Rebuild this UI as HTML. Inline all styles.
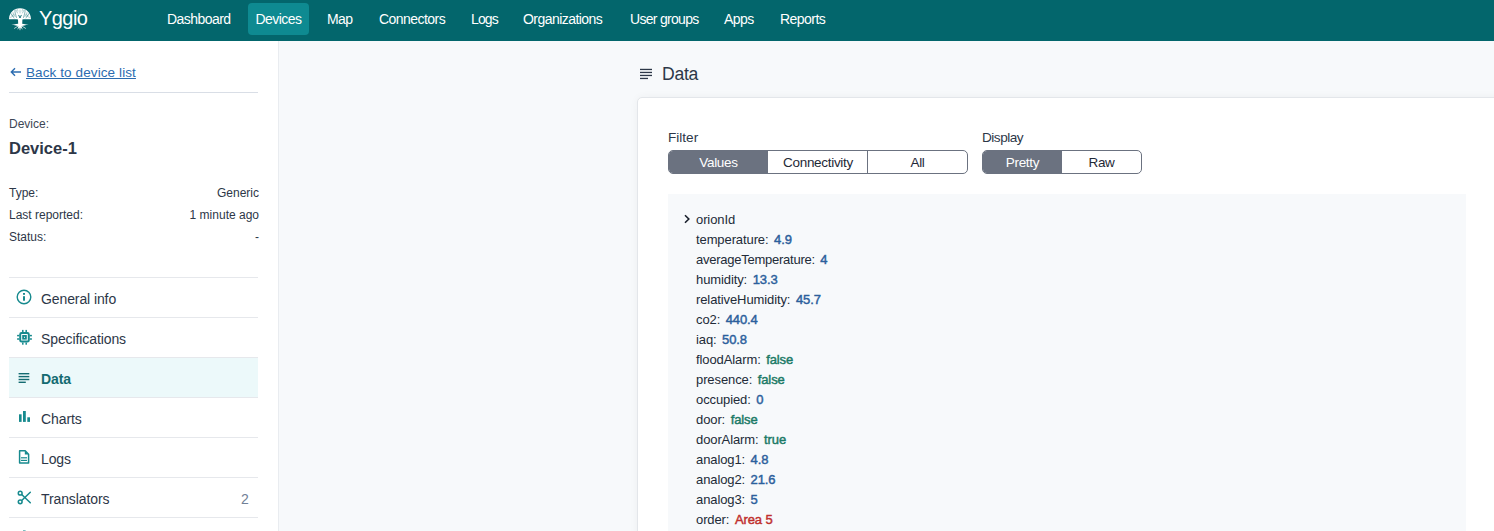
<!DOCTYPE html>
<html><head><meta charset="utf-8">
<style>
*{box-sizing:border-box;margin:0;padding:0}
html,body{width:1494px;height:531px;overflow:hidden;font-family:"Liberation Sans",sans-serif;background:#f7f9fb;color:#2d3748}
.abs{position:absolute;white-space:nowrap}
.nav{position:absolute;left:0;top:0;width:1494px;height:41px;background:#03666c}
.logo{position:absolute;left:8px;top:7px;width:24px;height:24px}
.brand{left:39px;top:8px;font-size:20px;line-height:20px;color:#fff;letter-spacing:-0.55px}
.ni{top:12px;font-size:14px;line-height:14px;color:#fff;letter-spacing:-0.55px}
.nbtn{position:absolute;left:248px;top:3px;width:61px;height:32px;background:#0e8a91;border-radius:4px}
.side{position:absolute;left:0;top:41px;width:279px;height:490px;background:#fff;border-right:1px solid #e9ecf0}
.hr{position:absolute;left:9px;width:249px;height:1px;background:#d9dee6}
.back{left:10px;top:66px;font-size:13.5px;line-height:13.5px;color:#2b6cb0;letter-spacing:0.1px}
.back u{text-decoration:underline;text-underline-offset:1px}
.kv{font-size:12px;line-height:12px;color:#2d3748}
.menu{position:absolute;left:9px;width:249px;height:40px;border-bottom:1px solid #e6e8ec}
.menu .t{position:absolute;left:32px;top:14px;line-height:14px;font-size:14px;color:#2d3748;letter-spacing:-0.1px}
.menu.act{background:#ecf9fa}
.menu.act .t{font-weight:bold;color:#146b71}
.menu svg{position:absolute;left:0;top:0}
.main-h{left:662px;top:65px;font-size:17.6px;line-height:18px;letter-spacing:-0.3px;color:#2d3748}
.card{position:absolute;left:637px;top:97px;width:900px;height:500px;background:#fff;border:1px solid #e3e6ea;border-radius:5px;box-shadow:0 0 9px rgba(0,0,0,0.045)}
.flbl{font-size:13.6px;line-height:14px;color:#2d3748}
.bg{position:absolute;top:150px;height:24px;border:1px solid #6b7280;border-radius:5px;overflow:hidden;background:#fff}
.bg div{position:absolute;top:0;height:22px;line-height:24px;text-align:center;font-size:13.5px;color:#1f2937;letter-spacing:-0.3px}
.bg div.on{background:#6b7280;color:#fff}
.box{position:absolute;left:668px;top:194px;width:798px;height:400px;background:#f7f9fb}
.row{position:absolute;left:696px;font-size:13px;line-height:13px;color:#222b38;white-space:nowrap;letter-spacing:-0.1px}
.row b{font-weight:normal;-webkit-text-stroke:0.45px currentColor;margin-left:2px}
.num{color:#2c5f9c}
.boo{color:#1b7a66}
.str{color:#c0302e}
</style></head><body>
<div class="nav">
  <svg class="logo" viewBox="0 0 24 24">
    <path d="M1 12.2 C1 6 5.5 1.2 12 1.2 C18.5 1.2 23 6 23 12.2 C20 12.6 16.5 11.8 14.4 12.6 L14.2 17 L10.2 17 L10 12.6 C7.5 11.8 4 12.6 1 12.2Z" fill="#fff"/>
    <g stroke="#03666c" fill="none" stroke-linecap="round">
      <path d="M10.8 8.3 L12 11 L13.2 8.3" stroke-width="0.9"/><path d="M12 6 L12 3" stroke-width="0.5" opacity=".6"/>
      <path d="M8.5 10.5 C7.5 7 6.5 4.5 7 2.8" stroke-width="0.6" opacity=".8"/>
      <path d="M15.5 10.5 C16.5 7 17.5 4.5 17 2.8" stroke-width="0.6" opacity=".8"/>
      <path d="M6 11 C4.5 8.5 3.2 7 2.6 6" stroke-width="0.6" opacity=".7"/>
      <path d="M18 11 C19.5 8.5 20.8 7 21.4 6" stroke-width="0.6" opacity=".7"/>
      <path d="M10 4 L9 2" stroke-width="0.5" opacity=".6"/><path d="M14 4 L15 2" stroke-width="0.5" opacity=".6"/>
      <path d="M4.5 9.5 L2 10.5" stroke-width="0.5" opacity=".6"/><path d="M19.5 9.5 L22 10.5" stroke-width="0.5" opacity=".6"/>
      <path d="M5 5.5 L6.5 8" stroke-width="0.5" opacity=".6"/><path d="M19 5.5 L17.5 8" stroke-width="0.5" opacity=".6"/><path d="M9.5 6 L8.3 3.5 M14.5 6 L15.7 3.5 M3.5 8 L5.5 9.2 M20.5 8 L18.5 9.2 M7 9.5 L5 7 M17 9.5 L19 7" stroke-width="0.5" opacity=".7"/>
    </g>
    <path d="M3.3 17.8 C7 17.2 9.5 17 12 16.5 C14.5 17 17 17.2 20.7 17.8 C17 18.3 15 18.5 13.5 19.5 L14.8 22.8 L12.5 20.5 L12 22.6 L11.5 20.5 L9.2 22.8 L10.5 19.5 C9 18.5 7 18.3 3.3 17.8Z" fill="#fff"/>
    <g stroke="#fff" stroke-width="0.8" fill="none" stroke-linecap="round" opacity=".9">
      <path d="M11 18.5 L6.5 21.3"/><path d="M13 18.5 L17.5 21.3"/><path d="M12 18 L12 22.8"/>
    </g>
  </svg>
  <div class="abs brand">Yggio</div>
  <div class="nbtn"></div>
  <div class="abs ni" style="left:167px">Dashboard</div>
  <div class="abs ni" style="left:255.5px">Devices</div>
  <div class="abs ni" style="left:327px">Map</div>
  <div class="abs ni" style="left:379px">Connectors</div>
  <div class="abs ni" style="left:471px;letter-spacing:-0.9px">Logs</div>
  <div class="abs ni" style="left:523px">Organizations</div>
  <div class="abs ni" style="left:630px;letter-spacing:-0.7px">User groups</div>
  <div class="abs ni" style="left:724px">Apps</div>
  <div class="abs ni" style="left:780px">Reports</div>
</div>
<div class="side"></div>
<div class="abs back"><svg width="12" height="10" viewBox="0 0 12 10" style="position:absolute;left:0;top:1px"><path d="M11 5 L1.5 5 M5 1.3 L1.3 5 L5 8.7" stroke="#2b6cb0" stroke-width="1.4" fill="none"/></svg><u style="position:absolute;left:16px;top:0">Back to device list</u></div>
<div class="hr" style="top:92px"></div>
<div class="abs kv" style="left:9px;top:118px;color:#3d4756">Device:</div>
<div class="abs" style="left:9px;top:140px;font-size:16.5px;line-height:17px;font-weight:bold;color:#2d3748">Device-1</div>
<div class="abs kv" style="left:9px;top:187px">Type:</div>
<div class="abs kv" style="right:1235px;top:187px">Generic</div>
<div class="abs kv" style="left:9px;top:209px">Last reported:</div>
<div class="abs kv" style="right:1235px;top:209px">1 minute ago</div>
<div class="abs kv" style="left:9px;top:231px">Status:</div>
<div class="abs kv" style="right:1235px;top:231px">-</div>
<div class="hr" style="top:277px;background:#e6e8ec"></div>
<div class="menu" style="top:278px"><svg width="40" height="40"><circle cx="15" cy="19" r="6.8" stroke="#178a8e" stroke-width="1.4" fill="none"/><rect x="14" y="18.2" width="2" height="4.5" fill="#178a8e"/><rect x="14" y="15" width="2" height="1.8" fill="#178a8e"/></svg><div class="t">General info</div></div>
<div class="menu" style="top:318px"><svg width="40" height="40"><g fill="#178a8e"><rect x="11.2" y="15" width="8.6" height="8.6" rx="1.4" fill="none" stroke="#178a8e" stroke-width="2"/><rect x="13.2" y="17" width="4.6" height="4.6"/><rect x="13.05" y="11.9" width="1.5" height="2.2"/><rect x="16.45" y="11.9" width="1.5" height="2.2"/><rect x="13.05" y="24.5" width="1.5" height="2.2"/><rect x="16.45" y="24.5" width="1.5" height="2.2"/><rect x="8.1" y="16.85" width="2.2" height="1.5"/><rect x="8.1" y="20.25" width="2.2" height="1.5"/><rect x="20.7" y="16.85" width="2.2" height="1.5"/><rect x="20.7" y="20.25" width="2.2" height="1.5"/></g><rect x="15" y="18.8" width="1" height="1" fill="#fff"/></svg><div class="t">Specifications</div></div>
<div class="menu act" style="top:358px"><svg width="40" height="40"><g fill="#146b71"><rect x="9.6" y="15" width="10.7" height="1.4"/><rect x="9.6" y="17.9" width="10.7" height="1.4"/><rect x="9.6" y="20.8" width="10.7" height="1.4"/><rect x="9.6" y="23.6" width="7.2" height="1.4"/></g></svg><div class="t">Data</div></div>
<div class="menu" style="top:398px"><svg width="40" height="40"><g fill="#178a8e"><rect x="10" y="16.3" width="2.6" height="7.6"/><rect x="14" y="13" width="2.8" height="10.9"/><rect x="18.3" y="19.3" width="2.7" height="4.6"/></g></svg><div class="t">Charts</div></div>
<div class="menu" style="top:438px"><svg width="40" height="40"><path d="M10.6 12.8 L16.2 12.8 L19.6 16.2 L19.6 25 L10.6 25Z" fill="none" stroke="#178a8e" stroke-width="1.5" stroke-linejoin="round"/><path d="M15.8 12.8 L15.8 16.6 L19.6 16.6Z" fill="#178a8e"/><rect x="12" y="19.2" width="6" height="1.2" fill="#178a8e"/><rect x="12" y="21.8" width="6" height="1.2" fill="#178a8e"/></svg><div class="t">Logs</div></div>
<div class="menu" style="top:478px"><svg width="40" height="40"><g stroke="#178a8e" stroke-width="1.5" fill="none"><circle cx="11.2" cy="15.2" r="1.9"/><circle cx="11.2" cy="23.8" r="1.9"/><path d="M12.7 16.5 L21.3 24.8 M12.7 22.5 L21.3 14.2" stroke-linecap="round"/></g></svg><div class="t">Translators</div></div>
<div class="abs" style="left:241px;top:492px;font-size:14px;line-height:14px;color:#718096">2</div>
<div class="menu" style="top:518px"><svg width="40" height="40"><rect x="14" y="12" width="2.6" height="3" fill="#178a8e" opacity="0.55"/></svg></div>

<svg class="abs" style="left:639px;top:67px" width="14" height="14"><g fill="#2d3748"><rect x="1" y="1.8" width="12" height="1.3"/><rect x="1" y="4.8" width="12" height="1.3"/><rect x="1" y="7.8" width="12" height="1.3"/><rect x="1" y="10.8" width="8" height="1.3"/></g></svg>
<div class="abs main-h">Data</div>
<div class="card"></div>
<div class="abs flbl" style="left:668px;top:131px">Filter</div>
<div class="abs flbl" style="left:982px;top:131px;letter-spacing:-0.5px">Display</div>
<div class="bg" style="left:668px;width:300px"><div class="on" style="left:0;width:99px">Values</div><div style="left:99px;width:100px">Connectivity</div><div style="left:198px;width:1px;background:#6b7280"></div><div style="left:199px;width:99px">All</div></div>
<div class="bg" style="left:982px;width:160px"><div class="on" style="left:0;width:79px">Pretty</div><div style="left:79px;width:79px">Raw</div></div>
<div class="box"></div>
<svg class="abs" style="left:682px;top:213px" width="10" height="12"><path d="M3 2.3 L6.8 6 L3 9.7" stroke="#1a202c" stroke-width="1.6" fill="none"/></svg>
<div class="row" style="top:213px">orionId</div>
<div class="row" style="top:233px">temperature: <b class="num">4.9</b></div>
<div class="row" style="top:253px;letter-spacing:-0.25px">averageTemperature: <b class="num">4</b></div>
<div class="row" style="top:273px">humidity: <b class="num">13.3</b></div>
<div class="row" style="top:293px">relativeHumidity: <b class="num">45.7</b></div>
<div class="row" style="top:313px">co2: <b class="num">440.4</b></div>
<div class="row" style="top:333px">iaq: <b class="num">50.8</b></div>
<div class="row" style="top:353px">floodAlarm: <b class="boo">false</b></div>
<div class="row" style="top:373px">presence: <b class="boo">false</b></div>
<div class="row" style="top:393px">occupied: <b class="num">0</b></div>
<div class="row" style="top:413px">door: <b class="boo">false</b></div>
<div class="row" style="top:433px">doorAlarm: <b class="boo">true</b></div>
<div class="row" style="top:453px">analog1: <b class="num">4.8</b></div>
<div class="row" style="top:473px">analog2: <b class="num">21.6</b></div>
<div class="row" style="top:493px">analog3: <b class="num">5</b></div>
<div class="row" style="top:513px">order: <b class="str">Area 5</b></div>
</body></html>
